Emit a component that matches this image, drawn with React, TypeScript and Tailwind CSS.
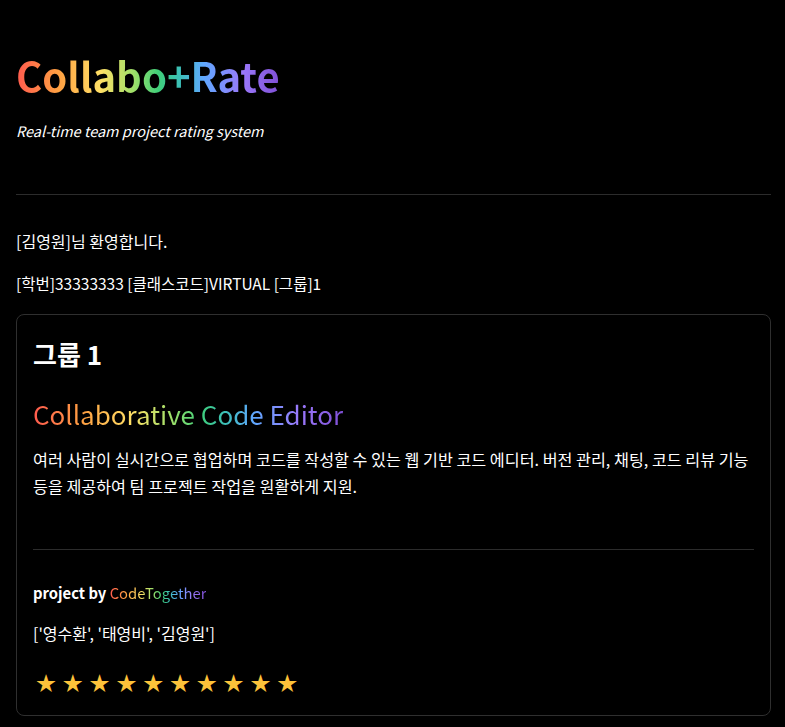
import React from "react";

const font = { fontFamily: '"Noto Sans CJK KR", "Noto Sans", sans-serif' };

const rainbow =
  "bg-[linear-gradient(90deg,#ff5a4e_0%,#ffa042_16%,#ffe066_32%,#9be06a_45%,#3fcf7a_54%,#3cc0b8_62%,#5fa8ff_71%,#9a78fa_86%,#7f4fd6_100%)] bg-clip-text text-transparent";

export default function App() {
  return (
    <div className="min-h-[727px] bg-black text-white pl-4 pr-[14px] pt-[51px]" style={font}>
      <h1 className={`text-[40px] leading-[48px] font-bold w-fit ${rainbow}`}>Collabo+Rate</h1>
      <p className="mt-[21px] text-[14.5px] leading-[22px] italic text-white">Real-time team project rating system</p>
      <hr className="mt-[52px] border-0 border-t border-[#2c2c2c]" />
      <p className="mt-[34px] text-[16px] leading-[24px]">[김영원]님 환영합니다.</p>
      <p className="mt-[18px] text-[15.5px] leading-[24px]">[학번]33333333 [클래스코드]VIRTUAL [그룹]1</p>
      <div className="mt-[19px] border border-[#2f2f2f] rounded-lg px-4 pt-[22px] pb-[17px]">
        <h2 className="text-[26px] leading-[34px] font-bold">그룹 1</h2>
        <h3 className={`mt-[26px] text-[26px] leading-[34px] w-fit ${rainbow}`}>Collaborative Code Editor</h3>
        <p className="mt-[15px] text-[16.2px] leading-[27px]">
          여러 사람이 실시간으로 협업하며 코드를 작성할 수 있는 웹 기반 코드 에디터. 버전 관리, 채팅, 코드 리뷰 기능 등을 제공하여 팀 프로젝트 작업을 원활하게 지원.
        </p>
        <hr className="mt-[49px] border-0 border-t border-[#2c2c2c]" />
        <p className="mt-[32px] text-[14.8px] leading-[22px] font-bold">
          project by <span className={`font-normal ${rainbow}`}>CodeTogether</span>
        </p>
        <p className="mt-[17px] text-[16px] leading-[24px]">['영수환', '태영비', '김영원']</p>
        <div className="mt-[23px] flex gap-[6.8px] pl-[3px] text-[20px] leading-[30px] text-[#fcc23a]">
          {Array.from({ length: 10 }).map((_, i) => (
            <span key={i}>★</span>
          ))}
        </div>
      </div>
    </div>
  );
}
